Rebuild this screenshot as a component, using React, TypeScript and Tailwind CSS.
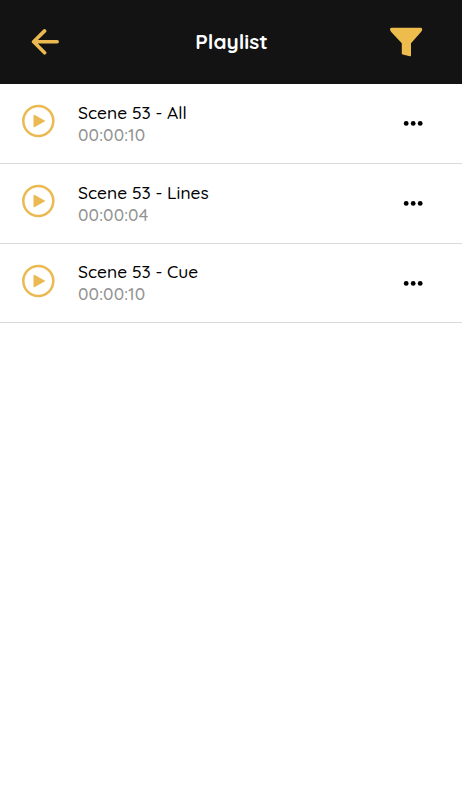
import React from 'react';

interface Track {
  id: number;
  title: string;
  duration: string;
}

const tracks: Track[] = [
  { id: 1, title: 'Scene 53 - All', duration: '00:00:10' },
  { id: 2, title: 'Scene 53 - Lines', duration: '00:00:04' },
  { id: 3, title: 'Scene 53 - Cue', duration: '00:00:10' },
];

const BackIcon: React.FC = () => (
  <svg width="28" height="26" viewBox="0 0 28 26" fill="none" stroke="#ecb850" strokeWidth="3.6" strokeLinecap="round" strokeLinejoin="round">
    <path d="M26.2 12.8H2.6M13.6 1.9L2.6 12.8l11 11" />
  </svg>
);

const FilterIcon: React.FC = () => (
  <svg width="34" height="30" viewBox="0 0 34 30" fill="#eebb4d">
    <path d="M2.5.8h29.300c1.300 0 1.800 1.600 1.200 2.800L32 5 22 16.200v12.200c0 .7-.4 1-1.200.8l-7.200-1.800c-.5-.2-.8-.5-.8-1V16.200L2.200 5l-.9-1.400C.7 2.400 1.200.8 2.500.8z" />
  </svg>
);

const PlayIcon: React.FC = () => (
  <svg width="34" height="34" viewBox="0 0 34 34">
    <circle cx="17.3" cy="17" r="15" fill="none" stroke="#ebb951" strokeWidth="2.5" />
    <path d="M13 11.1v11.8L23.6 17z" fill="#ebb951" stroke="#ebb951" strokeWidth="1" strokeLinejoin="round" />
  </svg>
);

const MoreIcon: React.FC = () => (
  <svg width="20" height="6" viewBox="0 0 20 6" fill="#000">
    <circle cx="3.2" cy="3.4" r="2.4" />
    <circle cx="10.2" cy="3.4" r="2.4" />
    <circle cx="17.2" cy="3.4" r="2.4" />
  </svg>
);

const App: React.FC = () => (
  <div className="min-h-screen bg-white font-['Quicksand','Lato',sans-serif]">
    <header className="flex h-[84px] items-center justify-between bg-[#131313] pl-[31px] pr-[39px]">
      <button className="w-[43px]" aria-label="Back"><BackIcon /></button>
      <h1 className="text-[20.8px] font-bold text-white">Playlist</h1>
      <button aria-label="Filter"><FilterIcon /></button>
    </header>
    <ul>
      {tracks.map(t => (
        <li key={t.id} className="flex h-[79.8px] items-center border-b border-[#d9d9d9] pl-[21px] pr-[39px]">
          <button className="mr-[23px] -mt-1" aria-label="Play"><PlayIcon /></button>
          <div className="flex-1 pt-px">
            <div className="text-[17.4px] leading-[22px] font-medium text-black">{t.title}</div>
            <div className="text-[17.4px] leading-[22px] font-medium tracking-[0.13px] text-[#929292]">{t.duration}</div>
          </div>
          <button aria-label="More"><MoreIcon /></button>
        </li>
      ))}
    </ul>
  </div>
);

export default App;
